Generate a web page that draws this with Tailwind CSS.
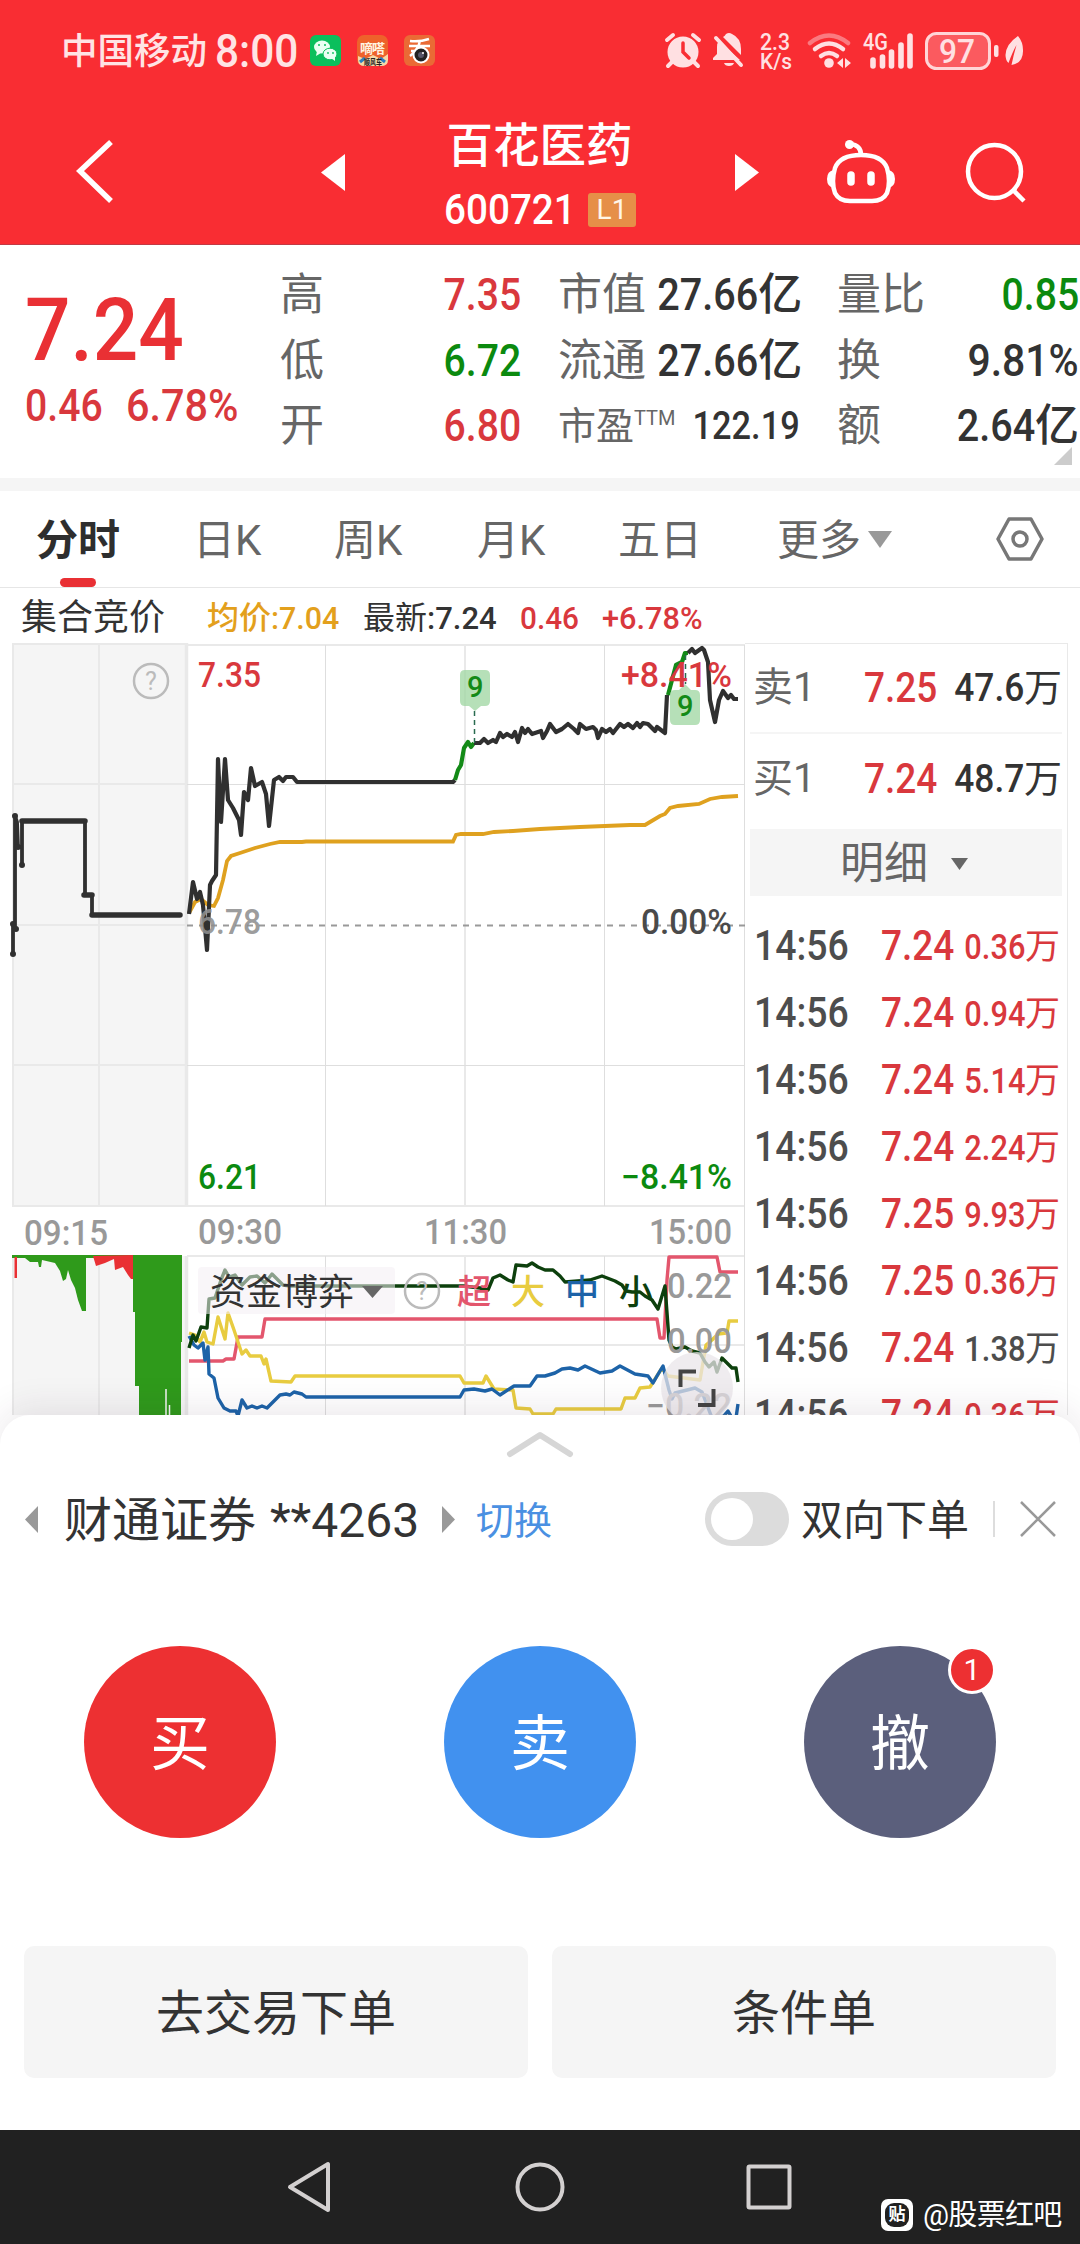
<!DOCTYPE html>
<html lang="zh-CN">

<head>
    <meta charset="UTF-8">
    <title>百花医药 600721</title>
    <script src="https://cdn.jsdelivr.net/npm/@tailwindcss/browser@4"></script>
</head>

<body class="w-[1080px] h-[2244px] overflow-hidden bg-white text-[#333] font-['Roboto','Noto_Sans_CJK_SC',sans-serif]">
    <header class="h-[245px] bg-[#f92d33] text-white border-b border-[#c23a44]">
        <!-- status bar -->
        <div class="h-[102px] pl-[61px] pr-[56px] flex items-center justify-between text-[#ffe3e4]">
            <div class="flex items-center">
                <span class="text-[36.5px] leading-none w-[154px] whitespace-nowrap font-medium pt-[2px]">中国移动</span>
                <span class="text-[46px] leading-none w-[95px]"><span class="inline-block origin-left scale-x-[.92] font-medium">8:00</span></span>
                <svg class="w-[126px] h-[32px]" viewBox="310 35 126 32">
                    <rect x="310" y="35" width="31" height="31" rx="6" fill="#0bbf5c" />
                    <ellipse cx="322" cy="47" rx="8" ry="6.5" fill="#eafff2" />
                    <path d="M317 51l-1 5 5-3z" fill="#eafff2" />
                    <ellipse cx="330" cy="54" rx="7" ry="5.8" fill="#eafff2" stroke="#0bbf5c" />
                    <path d="M331 58l4 3 0-5z" fill="#eafff2" />
                    <g fill="#0bbf5c"><circle cx="319" cy="45" r="1" /><circle cx="325" cy="45" r="1" /><circle cx="328" cy="53" r=".9" /><circle cx="333" cy="53" r=".9" /></g>
                    <rect x="357" y="35" width="31" height="31" rx="7" fill="#ee622b" />
                    <path d="M358 56l7 3 8-4 8 4 7-5v6q0 6-7 6h-16q-7 0-7-6z" fill="#f6d9a8" />
                    <path d="M360 62l5-4M385 62l-5-4" stroke="#2f7fc0" stroke-width="3" />
                    <text x="360" y="53" font-size="13" font-weight="700" fill="#fff3e0" textLength="25">嘀嗒</text>
                    <text x="364" y="65" font-size="8" font-weight="700" fill="#222" textLength="18" lengthAdjust="spacingAndGlyphs">顺风车</text>
                    <rect x="404" y="35" width="31" height="31" rx="6" fill="#ea6a35" />
                    <path d="M410 41q10 1 19-2M409 46h21M411 51h17M420 41q-2 9-10 15" stroke="#fff" stroke-width="2.5" fill="none" />
                    <circle cx="421" cy="55" r="7.5" fill="#222" stroke="#fff" stroke-width="2" />
                    <circle cx="421" cy="55" r="3" fill="#556" /><circle cx="423" cy="53" r="1" fill="#fff" />
                </svg>
            </div>
            <svg class="w-[362px] h-[44px]" viewBox="662 30 362 44" fill="#ffe0e2">
                <!-- alarm -->
                <circle cx="683" cy="53" r="15.5" />
                <path d="M667 41l6-5M699 41l-6-5M672 63l-4 4M694 63l4 4" stroke="#ffe0e2" stroke-width="4" stroke-linecap="round" />
                <path d="M683 44v9l6 6" stroke="#f92d33" stroke-width="3.5" fill="none" stroke-linecap="round" />
                <!-- muted bell -->
                <path d="M723 38q2-1 3-3 3-2 6 0 9 4 9 15v6zM719 42l21 19h-27v-2l4-4v-7q0-4 2-6zM724 64h10q-1 3-5 3t-5-3z" />
                <path d="M716 39l25 27" stroke="#ffe0e2" stroke-width="4" stroke-linecap="round" />
                <text x="760" y="51" font-size="23" font-weight="500" textLength="30" lengthAdjust="spacingAndGlyphs">2.3</text>
                <text x="760" y="70" font-size="22" font-weight="500" textLength="32" lengthAdjust="spacingAndGlyphs">K/s</text>
                <!-- wifi -->
                <g fill="none" stroke="#ffe0e2" stroke-width="4.5" stroke-linecap="round">
                    <path d="M810 44q19-15 38 0" stroke="#fa7a80" />
                    <path d="M815 50q14-11 28 0M821 57q8-6 16 0" />
                </g>
                <circle cx="829" cy="64" r="4.8" />
                <path d="M837 64l6-5v10zM845 59l6 5-6 5z" />
                <text x="863" y="51" font-size="23" font-weight="500" textLength="25" lengthAdjust="spacingAndGlyphs">4G</text>
                <g stroke="#ffe0e2" stroke-width="5.6" stroke-linecap="round">
                    <path d="M873 61V67M882.500 58V67M891.500 53V67M901 46V67M910 37V67" />
                </g>
                <rect x="926.500" y="34.500" width="63" height="35" rx="10" fill="#fb5a5f" stroke="#ffd5d7" stroke-width="3" />
                <text x="939" y="64" font-size="34" font-weight="500" textLength="36" lengthAdjust="spacingAndGlyphs">97</text>
                <rect x="994" y="46" width="4.500" height="12" rx="2" />
                <path d="M1018 37q-12 8-12.500 19 0 5 3 8 4-11 8-18-3 10-5 20 12-2 11.500-15 0-8-5-14z" />
            </svg>
        </div>
        <!-- title bar -->
        <div class="h-[142px] flex items-center relative">
            <svg class="w-[320px] h-[142px]" viewBox="0 102 320 142"><path d="M111 142L80 171l31 30" fill="none" stroke="#fff" stroke-width="5.500" /></svg>
            <svg class="w-[26px] h-[142px]" viewBox="320 102 26 142" fill="#fff"><path d="M345 154v37l-24-18.500z" /></svg>
            <div class="w-[389px] h-full pt-[15px]">
                <div class="h-[58px] leading-[58px] text-[46.5px] font-medium text-center -indent-[2px]">百花医药</div>
                <div class="h-[36px] mt-[17px] pl-[98px] flex items-center">
                    <span class="w-[144px] text-[42px] leading-[36px] font-medium"><span class="inline-block origin-left scale-x-[.92]">600721</span></span>
                    <span class="w-[48px] h-[34px] rounded-[3px] bg-[#e68f48] text-[#fff6e8] text-[28px] leading-[34px] text-center">L1</span>
                </div>
            </div>
            <svg class="w-[345px] h-[142px]" viewBox="735 102 345 142" fill="none" stroke="#fff" stroke-width="4.500">
                <path d="M735 154v37l24-18.500z" fill="#fff" stroke="none" />
                <path d="M861 155q21 0 26 13 4 14 0 25-4 8-15 8h-22q-11 0-15-8-4-11 0-25 5-13 26-13z" />
                <path d="M850 144q11 1 11 11" />
                <circle cx="849.500" cy="144.500" r="4.500" fill="#fff" stroke="none" />
                <path d="M834 170q-7 1-7 9t7 9zM888 170q7 1 7 9t-7 9z" fill="#fff" stroke="none" />
                <path d="M851 175v7M871 175v7" stroke-width="7.500" stroke-linecap="round" />
                <circle cx="994.500" cy="171.500" r="26.500" />
                <path d="M1013 190l11 11" />
            </svg>
        </div>
    </header>

    <!-- quote summary -->
    <section class="h-[233px] flex relative">
        <div class="w-[281px] pl-[25px] pt-[35px] text-[#e93034] font-medium">
            <div class="text-[88px] leading-[100px] h-[100px]"><span class="inline-block origin-left scale-x-[.91]">7.24</span></div>
            <div class="flex text-[45px] leading-[54px] text-[#d9383d] -mt-px">
                <span class="w-[101px]"><span class="inline-block origin-left scale-x-[.87]">0.46</span></span>
                <span class="inline-block origin-left scale-x-[.92]">6.78%</span>
            </div>
        </div>
        <div class="w-[240px] pt-[18px] text-[44px] leading-[65.5px] text-[#666]">
            <div class="flex justify-between"><span class="-ml-px">高</span><span class="font-medium text-[#d9383d] inline-block origin-right scale-x-[.89]">7.35</span></div>
            <div class="flex justify-between"><span class="-ml-px">低</span><span class="font-medium text-[#0b8a0f] inline-block origin-right scale-x-[.89]">6.72</span></div>
            <div class="flex justify-between"><span class="-ml-px">开</span><span class="font-medium text-[#d9383d] inline-block origin-right scale-x-[.89]">6.80</span></div>
        </div>
        <div class="w-[278px] pl-[37px] pt-[18px] text-[44px] leading-[65.5px] text-[#666] whitespace-nowrap">
            <div class="flex justify-between"><span>市值</span><span class="font-medium text-[#333]"><span class="inline-block origin-right scale-x-[.9]">27.66</span>亿</span></div>
            <div class="flex justify-between"><span>流通</span><span class="font-medium text-[#333]"><span class="inline-block origin-right scale-x-[.9]">27.66</span>亿</span></div>
            <div class="flex justify-between text-[38px] h-[65.5px]"><span class="flex">市盈<span class="text-[20px] leading-[48px]">TTM</span></span><span class="font-medium text-[39px] text-[#333] inline-block origin-right translate-x-px scale-x-[.88]">122.19</span></div>
        </div>
        <div class="w-[280px] pl-[38px] pt-[18px] text-[44px] leading-[65.5px] text-[#666] whitespace-nowrap">
            <div class="flex justify-between"><span>量比</span><span class="font-medium text-[#0b8a0f] inline-block origin-right scale-x-[.89]">0.85</span></div>
            <div class="flex justify-between"><span>换</span><span class="font-medium text-[#333] inline-block origin-right scale-x-[.93]">9.81%</span></div>
            <div class="flex justify-between"><span>额</span><span class="font-medium text-[#333]"><span class="inline-block origin-right scale-x-[.9]">2.64</span>亿</span></div>
        </div>
        <svg class="absolute right-[8px] bottom-[13px] w-[18px] h-[18px]" viewBox="0 0 18 18"><path d="M18 0v18H0z" fill="#ccc" /></svg>
    </section>
    <div class="h-[13px] bg-[#f5f5f5]"></div>

    <!-- period tabs -->
    <nav class="h-[97px] pl-[36px] flex items-center text-[42px] leading-none text-[#666] border-b border-[#e6e6e6]">
        <div class="w-[158px] h-full pt-[3px] flex items-center font-bold text-[#2e2e2e] relative">分时<span class="absolute left-[24px] bottom-0 w-[36px] h-[9px] rounded-full bg-[#e93034]"></span></div>
        <div class="w-[140px] pt-[3px] -indent-px">日K</div>
        <div class="w-[143px] pt-[3px]">周K</div>
        <div class="w-[141px] pt-[3px]">月K</div>
        <div class="w-[159px] pt-[3px]">五日</div>
        <div class="w-[218px] pt-[3px] flex items-center gap-[7px]">更多<svg class="w-[24px] h-[17px] -mt-[3px]" viewBox="0 0 24 17"><path d="M0 0h24L12 17z" fill="#999" /></svg></div>
        <svg class="w-[50px] h-[46px]" viewBox="0 0 50 46" fill="none" stroke="#777" stroke-width="3.500" stroke-linejoin="round"><path d="M14 3h22l11 20-11 20H14L3 23z" /><circle cx="25" cy="23" r="7" /></svg>
    </nav>

    <div class="h-[55px] pl-[21px] pt-[4px] flex items-center text-[32px] leading-none whitespace-nowrap">
        <div class="w-[186px] text-[36px]">集合竞价</div>
        <div class="w-[156px] text-[#e3a01c] font-medium">均价<span class="inline-block origin-left scale-x-[.95]">:7.04</span></div>
        <div class="w-[157px]">最新<span class="inline-block origin-left scale-x-[.97] font-medium">:7.24</span></div>
        <div class="w-[82px] text-[#d9383d] font-medium"><span class="inline-block origin-left scale-x-[.93]">0.46</span></div>
        <div class="text-[#d9383d] font-medium"><span class="inline-block origin-left scale-x-[.96]">+6.78%</span></div>
    </div>

    <section class="h-[807px] flex">
        <!-- time-share chart, coordinates are page pixels -->
        <svg class="w-[745px] h-[772px]" viewBox="0 643 745 772" fill="none">
            <rect x="12" y="643" width="175" height="563" fill="#f5f5f5" />
            <rect x="12" y="1256" width="175" height="160" fill="#f5f5f5" />
            <g stroke="#e9e9e9" stroke-width="2">
                <path d="M12 644H187M13 643V1206M99 643V1206M12 784H187M12 925H187M12 1065H187M12 1206H745" />
                <path d="M187 645H745M465 645V1206M187 1256H745M465 1256V1416M187 1345H745M13 1256V1416M99 1256V1416" />
                <path d="M186.500 643V1206M186.500 1256V1416" stroke-width="3.500" />
            </g>
            <path d="M325.500 645V1206M604.500 645V1206M187 784.500H745M187 1065.500H745M325.500 1256V1416M604.500 1256V1416M744.500 645V1416" stroke="#dedede" />
            <path d="M187 925.500H745" stroke="#999" stroke-width="1.800" stroke-dasharray="6 6" />

            <!-- call auction -->
            <g stroke="#303030" stroke-linejoin="round" stroke-linecap="round">
                <path d="M13 954V924L16 929H15V816L17 822 18 847H22V865 821M85 821V895H92V915" stroke-width="3.800" />
                <path d="M22 821H85M84 895H92M92 915H180" stroke-width="5.500" />
                <path d="M13 954h0M13 924h0M15 816h0M22 865h0M16 929h0M18 847h0" stroke-width="6" />
            </g>

            <polyline points="189,913 195,902 201,899 208,905 214,906 218,898 223,880 227,861 231,856 240,853 255,848 270,844 280,842 302,842 306,841.5 453,841.5 456,835 461,834 483,834 494,832 513,831 540,829 580,827 605,826 630,825 645,825 650,822 660,816 665,814 670,808 678,806 699,804 710,799 722,797 738,796" stroke="#dfa11f" stroke-width="3.800" />
            <g stroke-width="4.200" stroke-linejoin="round">
                <polyline stroke="#303030" points="189,914 193,882 197,899 200,892 203,905 207,950 210,885 212,881 216,875 218,759 221,822 225,759 228,800 233,808 239,820 241,835 244,792 248,800 251,768 255,786 262,782 266,794 269,826 274,780 279,777 283,781 286,777 293,777 297,782 453,782 455,780" />
                <polyline stroke="#138a17" points="455,780 458,770 461,765 464,748 468,742 471,747 474,743" />
                <polyline stroke="#303030" points="474,743 480,743 484,739 488,743 493,740 496,742 500,733 503,737 507,734 512,737 515,732 518,742 522,728 525,733 528,729 532,734 541,731 543,738 547,731 550,724 556,732 562,729 568,724 574,729 578,733 580,724 586,729 593,727 596,730 598,738 602,729 606,732 610,729 613,733 620,724 624,727 628,724 633,728 637,723 640,727 643,723 648,724 655,731 657,727 665,733 667,695" />
                <polyline stroke="#138a17" points="668,695 676,665 682,662 685,653 688,653" />
                <polyline stroke="#303030" points="688,653 692,649 695,653 702,648 704,650 708,662 710,700 715,722 719,700 723,691 728,698 731,695 734,699 738,699" />
            </g>
            <path d="M474.500 711V743M685.500 655V684" stroke="#2a6b50" stroke-width="1.500" stroke-dasharray="5 4" />
            <path d="M465 670h20q5 0 5 5v26q0 5-5 5h-4l-6 5-6-5h-4q-5 0-5-5v-26q0-5 5-5zM675 690h4l6-6 6 6h4q5 0 5 5v25q0 5-5 5h-20q-5 0-5-5v-25q0-5 5-5z" fill="#9ed6a0" fill-opacity=".75" />

            <g font-size="35" font-weight="500" fill="#999">
                <text x="467" y="697" font-size="29" font-weight="500" fill="#138a17">9</text>
                <text x="677" y="716" font-size="29" font-weight="500" fill="#138a17">9</text>
                <text x="198" y="687" fill="#d9383d" textLength="63" lengthAdjust="spacingAndGlyphs">7.35</text>
                <text x="621" y="687" fill="#d9383d" textLength="111" lengthAdjust="spacingAndGlyphs">+8.41%</text>
                <text x="198" y="934" fill="#8f8f8f" fill-opacity=".9" textLength="63" lengthAdjust="spacingAndGlyphs">6.78</text>
                <text x="641" y="934" fill="#4a4a4a" textLength="91" lengthAdjust="spacingAndGlyphs">0.00%</text>
                <text x="198" y="1189" fill="#0b8a0f" textLength="63" lengthAdjust="spacingAndGlyphs">6.21</text>
                <text x="621" y="1189" fill="#0b8a0f" textLength="111" lengthAdjust="spacingAndGlyphs">−8.41%</text>
                <text x="24" y="1245" textLength="84" lengthAdjust="spacingAndGlyphs">09:15</text>
                <text x="198" y="1244" textLength="84" lengthAdjust="spacingAndGlyphs">09:30</text>
                <text x="424" y="1244" textLength="83" lengthAdjust="spacingAndGlyphs">11:30</text>
                <text x="649" y="1244" textLength="83" lengthAdjust="spacingAndGlyphs">15:00</text>
            </g>
            <circle cx="151" cy="681" r="17" stroke="#bbb" stroke-width="2.500" />
            <text x="151" y="690" font-size="25" fill="#bbb" text-anchor="middle">?</text>

            <!-- auction volume -->
            <path d="M12 1255H86V1311H82L78 1300 75 1288 71 1280 68 1270 66 1279 63 1281 60 1271 55 1263 42 1260 41 1267 39 1267 38 1262 30 1262 25 1258H12zM133 1255H182V1342H181V1416H139V1386H135V1312H133zM86 1255H133V1258H86z" fill="#2f9a1b" />
            <path d="M14.500 1257h2.500v21h-2.500zM93 1256L96 1266 105 1263 114 1259 115 1270 123 1267 128 1275 131 1279H133V1255z" fill="#e93034" />
            <path d="M166 1389V1416M169.500 1405V1416" stroke="#f5f5f5" stroke-width="1.500" />

            <!-- capital flow -->
            <g stroke-width="3.400" stroke-linejoin="round">
                <polyline stroke="#e3566d" points="189,1361 223,1361 226,1359 234,1359 238,1337 262,1337 265,1319 657,1319 660,1338 664,1338 667,1280 669,1257 717,1257 720,1272 738,1272" />
                <polyline stroke="#e8cc40" points="189,1333 195,1335 200,1342 204,1332 207,1342 213,1344 218,1317 225,1339 228,1313 234,1330 242,1354 246,1350 250,1356 261,1356 264,1364 266,1359 271,1381 291,1382 295,1376 460,1376 464,1383 483,1383 486,1376 494,1389 513,1390 516,1408 530,1409 533,1414 553,1414 556,1409 621,1409 625,1398 635,1398 640,1388 650,1387 662,1368 668,1376 700,1380 706,1345 712,1340 718,1334 727,1333 729,1321 738,1321" />
                <polyline stroke="#1d63a8" points="189,1336 194,1345 198,1348 203,1343 205,1360 208,1347 209,1374 214,1378 218,1398 224,1408 230,1411 236,1411 238,1416 242,1400 247,1408 252,1406 257,1408 262,1406 267,1408 272,1403 280,1395 286,1394 290,1395 294,1392 302,1394 306,1397 460,1397 464,1390 474,1389 485,1391 492,1389 500,1395 514,1386 530,1386 537,1376 545,1376 555,1373 562,1369 570,1368 578,1370 585,1366 600,1373 612,1371 620,1366 635,1374 648,1376 653,1383 657,1376 663,1366 669,1390 672,1399 675,1393 695,1388 702,1392 707,1405 712,1418 722,1418 728,1411 732,1418 736,1418 738,1404" />
                <polyline stroke="#0d400d" points="189,1348 193,1335 196,1341 201,1327 207,1328 209,1299 215,1298 221,1280 225,1270 229,1277 235,1275 242,1285 250,1277 257,1276 265,1283 272,1274 283,1285 290,1286 463,1286 480,1288 488,1290 493,1278 500,1275 508,1280 513,1282 516,1265 527,1266 532,1263 538,1267 545,1270 553,1270 560,1276 565,1282 590,1280 602,1276 615,1281 622,1285 626,1291 632,1292 640,1292 645,1296 652,1300 658,1309 665,1286 669,1340 672,1347 676,1349 685,1347 692,1351 700,1353 705,1362 709,1367 714,1362 717,1372 722,1358 728,1364 732,1368 736,1368 738,1382" />
            </g>
            <rect x="198" y="1267" width="197" height="47" rx="4" fill="#f4eef4" fill-opacity=".55" />
            <text x="210" y="1305" font-size="36" fill="#333">资金博弈</text>
            <path d="M362 1286h21l-10.500 12z" fill="#666" />
            <circle cx="422" cy="1291" r="17" stroke="#bbb" stroke-width="2.500" />
            <text x="422" y="1300" font-size="25" fill="#bbb" text-anchor="middle">?</text>
            <g font-size="34" font-weight="500">
                <text x="457" y="1304" fill="#e3566d">超</text>
                <text x="511" y="1304" fill="#e8cc40">大</text>
                <text x="565" y="1304" fill="#1d63a8">中</text>
                <text x="619" y="1304" fill="#0d400d">小</text>
            </g>
            <g font-size="35" font-weight="500" fill="#999">
                <text x="667" y="1298" textLength="65" lengthAdjust="spacingAndGlyphs">0.22</text>
                <text x="667" y="1353" textLength="65" lengthAdjust="spacingAndGlyphs">0.00</text>
                <text x="646" y="1418" textLength="86" lengthAdjust="spacingAndGlyphs">−0.22</text>
            </g>
            <circle cx="697" cy="1388" r="36" fill="#e9e6e9" fill-opacity=".75" />
            <path d="M680.500 1387V1371.500H696M698 1405H713.500V1389" stroke="#444" stroke-width="4" />
        </svg>

        <!-- order book -->
        <div class="w-[323px] h-[772px] pl-[5px] pr-[5px] border-t border-r border-[#e9e9e9] text-[42px] leading-none overflow-hidden">
            <div class="h-[90px] pl-[3px] flex items-center border-b-2 border-[#f5f5f5] whitespace-nowrap">
                <span class="w-[111px] text-[40px] text-[#666]">卖1</span>
                <span class="w-[90px] font-medium text-[#d9383d]"><span class="inline-block origin-left translate-x-[3px] scale-x-[.88]">7.25</span></span>
                <span class="ml-auto text-[38px] text-[#333]"><span class="inline-block origin-right scale-x-[.93] font-medium">47.6</span>万</span>
            </div>
            <div class="h-[95px] pb-[6px] pl-[3px] flex items-center whitespace-nowrap">
                <span class="w-[111px] text-[40px] text-[#666]">买1</span>
                <span class="w-[90px] font-medium text-[#d9383d]"><span class="inline-block origin-left translate-x-[3px] scale-x-[.88]">7.24</span></span>
                <span class="ml-auto text-[38px] text-[#333]"><span class="inline-block origin-right scale-x-[.93] font-medium">48.7</span>万</span>
            </div>
            <div class="h-[67px] bg-[#f5f5f5] pl-[90px] pt-[2px] flex items-center gap-[23px] text-[44px] text-[#666]">明细<svg class="w-[17px] h-[12px]" viewBox="0 0 17 12"><path d="M0 0h17L8.500 12z" fill="#666" /></svg></div>
            <div id="ticks" class="pt-[16px] pl-[4px]"></div>
        </div>
    </section>

    <!-- trade sheet -->
    <section class="relative -mt-[35px] h-[715px] rounded-t-[30px] bg-white shadow-[0_-6px_36px_rgba(60,30,60,0.10)] flex flex-col">
        <div class="h-[58px] flex justify-center items-center"><svg class="w-[68px] h-[28px]" viewBox="0 0 68 28"><path d="M4 24L34 5l30 19" fill="none" stroke="#d6d6d6" stroke-width="6" stroke-linecap="round" stroke-linejoin="round" /></svg></div>
        <div class="h-[92px] pl-[25px] pr-[24px] flex items-center leading-none whitespace-nowrap">
            <svg class="w-[13px] h-[27px] mr-[26px]" viewBox="0 0 13 27"><path d="M13 0v27L0 13.500z" fill="#999" /></svg>
            <span class="w-[378px] pt-[3px] text-[48px]">财通证券 <span class="inline-block origin-left translate-x-[2px]">**4263</span></span>
            <svg class="w-[13px] h-[27px] mr-[21px]" viewBox="0 0 13 27"><path d="M0 0v27l13-13.500z" fill="#999" /></svg>
            <span class="pt-[3px] text-[38px] text-[#4a90e2]">切换</span>
            <span class="ml-auto w-[84px] h-[54px] rounded-full bg-[#dcdcdc] p-[6px] mr-[12px]"><span class="block size-[42px] rounded-full bg-white"></span></span>
            <span class="pt-[3px] text-[42px]">双向下单</span>
            <span class="w-[2px] h-[36px] bg-[#ddd] ml-[24px] mr-[25px]"></span>
            <svg class="w-[36px] h-[36px]" viewBox="0 0 36 36"><path d="M1 1l34 34M35 1L1 35" stroke="#999" stroke-width="2.500" /></svg>
        </div>
        <div class="h-[192px] mt-[81px] grid grid-cols-3 justify-items-center text-white text-[60px]">
            <div class="size-[192px] pt-[5px] rounded-full bg-[#ed3032] flex items-center justify-center">买</div>
            <div class="size-[192px] pt-[5px] rounded-full bg-[#4191ef] flex items-center justify-center">卖</div>
            <div class="size-[192px] pt-[5px] rounded-full bg-[#5b5f7c] flex items-center justify-center relative">撤
                <span class="absolute left-[144px] top-0 size-[48px] rounded-full border-[3px] border-white bg-[#ed3032] text-[30px] leading-[42px] text-center">1</span>
            </div>
        </div>
        <div class="mt-[108px] px-[24px] grid grid-cols-2 gap-[24px] text-[48px]">
            <div class="h-[132px] pt-[3px] rounded-[10px] bg-[#f5f5f5] flex items-center justify-center">去交易下单</div>
            <div class="h-[132px] pt-[3px] rounded-[10px] bg-[#f5f5f5] flex items-center justify-center">条件单</div>
        </div>
    </section>

    <footer class="h-[114px] bg-[#212121] relative">
        <svg class="w-[1080px] h-[114px]" viewBox="0 2130 1080 114" fill="none" stroke="#d3d0d0" stroke-width="4" stroke-linejoin="round">
            <path d="M328 2164v46l-38-23z" />
            <circle cx="540" cy="2187" r="22.500" />
            <rect x="748.500" y="2166.500" width="41" height="41" rx="1" />
        </svg>
        <div class="absolute left-[881px] top-[69px] flex items-center gap-[10px] text-[29px] leading-none text-white whitespace-nowrap">
            <span class="size-[32px] rounded-[7px] bg-white flex items-center justify-center"><span class="size-[24px] rounded-[9px] bg-[#212121] text-[17px] leading-[23px] font-bold text-center">贴</span></span>
            <span class="tracking-[-.7px] pt-px">@股票红吧</span>
        </div>
    </footer>

    <script>
        const ticks = [
            ['14:56', '7.24', '0.36', 'up'],
            ['14:56', '7.24', '0.94', 'up'],
            ['14:56', '7.24', '5.14', 'up'],
            ['14:56', '7.24', '2.24', 'up'],
            ['14:56', '7.25', '9.93', 'up'],
            ['14:56', '7.25', '0.36', 'up'],
            ['14:56', '7.24', '1.38', 'flat'],
            ['14:56', '7.24', '0.36', 'up']
        ];
        document.getElementById('ticks').innerHTML = ticks.map(([time, price, vol, dir]) => `
            <div class="h-[67px] pr-[2px] flex items-center whitespace-nowrap">
                <span class="w-[126px] text-[#4d4d4d] font-medium"><span class="inline-block origin-left scale-x-[.89]">${time}</span></span>
                <span class="font-medium text-[#d9383d]"><span class="inline-block origin-left translate-x-[9px] scale-x-[.88]">${price}</span></span>
                <span class="ml-auto pt-[3px] text-[35px] ${dir === 'up' ? 'text-[#d9383d]' : 'text-[#4d4d4d]'}"><span class="inline-block origin-right scale-x-[.88] font-medium">${vol}</span>万</span>
            </div>`).join('');
    </script>
</body>

</html>
